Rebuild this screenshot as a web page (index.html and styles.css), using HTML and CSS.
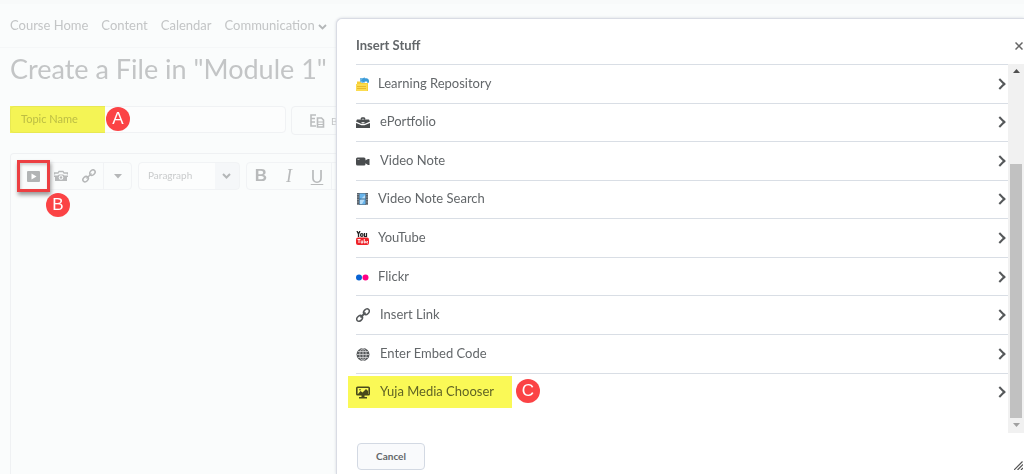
FILE: index.html
```html
<!DOCTYPE html>
<html lang="en">
<head>
<meta charset="utf-8">
<title>Create a File in "Module 1"</title>
<link rel="stylesheet" href="styles.css">
</head>
<body>
<div class="page">
  <nav class="nav">
    <a href="#">Course Home</a>
    <a href="#">Content</a>
    <a href="#">Calendar</a>
    <a href="#" class="nav-menu">Communication
      <svg width="9" height="6" viewBox="0 0 9 6"><path d="M1 1l3.5 3.5L8 1" fill="none" stroke="#b4b7b8" stroke-width="1.8"/></svg></a>
  </nav>
  <main class="main">
    <h1 class="title">Create a File in "Module 1"</h1>
    <div class="topic-row">
      <div class="topic-field">
        <input class="topic" type="text" placeholder="Topic Name" aria-label="Topic Name">
        <span class="topic-mark"></span>
        <span class="badge badge-a">A</span>
      </div>
      <button class="template" type="button">
        <svg width="15" height="14" viewBox="0 0 15 14"><path d="M6 1H1v11h5M1 4.500h4M1 8h4" fill="none" stroke="#bbbdbe" stroke-width="1.600"/><path d="M7.500 4h4l2 2v7h-6z" fill="#fafcfc" stroke="#bbbdbe" stroke-width="1.600"/><path d="M8 8h5M8 10.500h5" stroke="#bbbdbe"/></svg>
        <span>Browse</span>
      </button>
    </div>
    <section class="editor">
      <div class="toolbar">
        <div class="group">
          <button class="tool insert" type="button" aria-label="Insert Stuff">
            <svg width="13" height="11" viewBox="0 0 13 11"><rect width="13" height="11" rx="1" fill="#b2b4b5"/><path d="M4.500 2.500v6l5-3z" fill="#fff"/></svg>
            <span class="badge badge-b">B</span>
          </button>
          <button class="tool" type="button" aria-label="Insert Image">
            <svg width="14" height="12" viewBox="0 0 14 12"><path d="M.5 4.500V3H4l1-1.500h4L10 3h3.500v1.500" fill="none" stroke="#b8babb" stroke-width="1.300"/><path d="M0 5.500h3.500L5 4.500h4l1.500 1H14V7h-1v4H1V7H0z" fill="#b8babb"/><circle cx="7" cy="7.500" r="2.300" fill="#fafcfc"/><circle cx="7" cy="7.500" r="1.200" fill="#b8babb"/></svg>
          </button>
          <button class="tool" type="button" aria-label="Quicklink">
            <svg width="14" height="14" viewBox="0 0 14 14" fill="none" stroke="#b5b7b8" stroke-width="1.500"><ellipse cx="3.600" cy="10.200" rx="3" ry="2.300" transform="rotate(-45 3.600 10.200)"/><ellipse cx="10.400" cy="3.600" rx="3" ry="2.300" transform="rotate(-45 10.400 3.600)"/><path d="M4.500 9.500l5-5"/></svg>
          </button>
          <button class="tool more" type="button" aria-label="More">
            <svg width="8" height="5" viewBox="0 0 8 5"><path d="M0 0h8L4 4.500z" fill="#b5b7b8"/></svg>
          </button>
        </div>
        <div class="format">
          <select aria-label="Format"><option>Paragraph</option></select>
          <svg width="9" height="6" viewBox="0 0 9 6"><path d="M1 1l3.500 3.500L8 1" fill="none" stroke="#b4b7b8" stroke-width="2"/></svg>
        </div>
        <div class="group styles">
          <button class="tool bold" type="button">B</button>
          <button class="tool italic" type="button">I</button>
          <button class="tool under" type="button">U</button>
          <button class="tool more" type="button" aria-label="More styles"></button>
        </div>
      </div>
    </section>
  </main>
</div>

<div class="dialog" role="dialog" aria-labelledby="dialog-title">
  <header class="dialog-head">
    <h2 id="dialog-title">Insert Stuff</h2>
    <button class="close" type="button" aria-label="Close">
      <svg width="8" height="8" viewBox="0 0 8 8"><path d="M.5.5l7 7M7.500.5l-7 7" stroke="#666" stroke-width="1.500"/></svg>
    </button>
  </header>
  <div class="dialog-body">
    <ul class="list">
      <li><a href="#">
        <svg class="pic" width="14" height="14" viewBox="0 0 14 14"><path d="M1 6V4.500h3.500l1 1.500H12v8H1z" fill="#f7cf35"/><path d="M0 7h11v7H0z" fill="#fbdc50"/><path d="M1 9.500h9M1 11.500h9" stroke="#eab92a"/><path d="M4 5V1h5v1.500h3.500V6H11V4.500H9L6.500 6z" fill="#6fb9e6"/><path d="M5 3.500L8.500 0v1.500c3-1 5 .5 4.500 4.500-1-1.500-2.500-2-4.500-1.500V6z" fill="#3b9bd8"/></svg>
        <span>Learning Repository</span></a></li>
      <li><a href="#">
        <svg width="14" height="14" viewBox="0 0 14 14"><path d="M5 4.500L6 3h2l1 1.500" fill="none" stroke="#494c4e" stroke-width="1.500"/><path d="M1 4.500h12l1 2L8.500 9h-3L0 6.500z" fill="#494c4e"/><path d="M0 8l5.500 2.300h3L14 8v5H0z" fill="#494c4e"/><path d="M5.500 7h3v1.500h-3z" fill="#ddd"/></svg>
        <span>ePortfolio</span></a></li>
      <li><a href="#">
        <svg width="14" height="14" viewBox="0 0 14 14"><rect y="3.500" width="9.500" height="8" rx="1.500" fill="#494c4e"/><path d="M9 6.500l3-1.500h1.500v6H12L9 9z" fill="#494c4e"/><path d="M1.500 5.500h2" stroke="#aaa"/></svg>
        <span>Video Note</span></a></li>
      <li><a href="#">
        <svg class="pic" width="14" height="14" viewBox="0 0 14 14"><path d="M1 1h11v12H1z" fill="#59616a"/><path d="M3.500 1.500h6v11h-6z" fill="#67b4ec"/><path d="M4 8l5-5v4l-3 5H4z" fill="#b6dcf7"/><path d="M3 7h7" stroke="#376a94"/><path d="M2 2v11M11 2v11" stroke="#b4babf" stroke-dasharray="1 1.500"/></svg>
        <span>Video Note Search</span></a></li>
      <li><a href="#">
        <svg class="pic" width="14" height="14" viewBox="0 0 14 14"><path d="M1 0l1.500 3L4 0M2.500 3v3" fill="none" stroke="#222" stroke-width="1.300"/><circle cx="5.800" cy="4" r="1.300" fill="none" stroke="#222" stroke-width="1.200"/><path d="M8.500 2v3.500h2V2" fill="none" stroke="#222" stroke-width="1.200"/><rect y="6.500" width="13" height="7.500" rx="2" fill="#ee2229"/><path d="M1.500 8.500h3M3 8.500V12M5.200 9.500V12h1.500V9.500M8.300 8v4h1v-2M12 10.500h-1.200V12H12" fill="none" stroke="#fff" stroke-width=".9"/></svg>
        <span>YouTube</span></a></li>
      <li><a href="#">
        <svg class="pic" width="14" height="14" viewBox="0 0 14 14"><circle cx="3" cy="7.500" r="3" fill="#0863d4"/><circle cx="9.500" cy="7.500" r="3" fill="#ff0084"/></svg>
        <span>Flickr</span></a></li>
      <li><a href="#">
        <svg width="14" height="14" viewBox="0 0 14 14" fill="none" stroke="#55585a" stroke-width="1.500"><ellipse cx="3.600" cy="10.400" rx="3.200" ry="2.400" transform="rotate(-45 3.600 10.400)"/><ellipse cx="10.400" cy="3.800" rx="3.200" ry="2.400" transform="rotate(-45 10.400 3.800)"/><path d="M4.500 9.500l5-5" stroke-width="1.800"/></svg>
        <span>Insert Link</span></a></li>
      <li><a href="#">
        <svg width="14" height="14" viewBox="0 0 14 14" fill="none"><circle cx="7" cy="7.500" r="6.500" fill="#55585a"/><g stroke="#d5d6d7" stroke-width=".8"><ellipse cx="7" cy="7.500" rx="3.200" ry="6"/><path d="M7 1.500v12M1 7.500h12M2 4.500h10M2 10.500h10"/></g></svg>
        <span>Enter Embed Code</span></a></li>
      <li><a href="#" class="marked">
        <svg width="14" height="14" viewBox="0 0 14 14"><rect x=".8" y="2.300" width="12.400" height="7.400" rx=".8" fill="none" stroke="#494c4e" stroke-width="1.600"/><path d="M2 9l2.500-3 2 1.500L10 4l2 2v4H2z" fill="#494c4e"/><circle cx="4" cy="4.700" r=".8" fill="#494c4e"/><path d="M5.500 10h3v2H11v1.500H3V12h2.500z" fill="#494c4e"/></svg>
        <span>Yuja Media Chooser</span><span class="badge badge-c">C</span></a></li>
    </ul>
    <div class="scrollbar">
      <svg width="7" height="4" viewBox="0 0 7 4"><path d="M0 4h7L3.500 0z" fill="#505050"/></svg>
      <div class="thumb"></div>
      <svg width="7" height="4" viewBox="0 0 7 4"><path d="M0 0h7L3.500 4z" fill="#a0a0a0"/></svg>
    </div>
  </div>
  <footer class="dialog-foot">
    <button class="cancel" type="button">Cancel</button>
    <svg class="grip" width="9" height="9" viewBox="0 0 9 9"><path d="M0 9l8.500-8.500M3.500 9L9 3.500M7 9l2-2" stroke="#555" stroke-width="1.200"/></svg>
  </footer>
</div>
</body>
</html>
```
FILE: styles.css
```css
*,
*::after {
  box-sizing: border-box;
}

body {
  margin: 0;
  height: 100vh;
  overflow: hidden;
  background: #fafcfc;
  color: #63676a;
  font: 13px/20px Lato, sans-serif;
}

button,
input,
select {
  margin: 0;
  font-family: inherit;
}

a {
  color: inherit;
  text-decoration: none;
}

.page {
  display: flex;
  flex-direction: column;
  height: 100vh;
  color: #c3c5c6;
}

.nav {
  display: flex;
  gap: 13px;
  padding: 11px 10px 12px;
  border-top: 4px solid #f8fafa;
  border-bottom: 1px solid #f5f7f8;
}

.main {
  display: flex;
  flex: 1;
  flex-direction: column;
  padding: 4px 10px 0;
}

.title {
  margin: 0 0 20px;
  font-size: 27px;
  font-weight: 400;
  line-height: 34px;
}

.topic-row {
  display: flex;
  gap: 5px;
}

.topic-field {
  position: relative;
  width: 276px;
}

.topic {
  width: 100%;
  height: 27px;
  padding: 0 10px 2px;
  border: 1px solid #f0f2f4;
  border-radius: 4px;
  background: #fcfdfd;
  font-size: 11px;
}

.topic::placeholder {
  color: #c3c5c6;
}

.topic-mark {
  position: absolute;
  inset: 0 auto 2px 0;
  width: 95px;
  background: #f7f656;
  mix-blend-mode: multiply;
}

.badge {
  position: absolute;
  width: 24px;
  height: 24px;
  border-radius: 50%;
  background: #fb4345;
  color: #fff;
  font: 17px/24px "Liberation Sans", sans-serif;
  text-align: center;
}

.badge-a {
  top: 1px;
  left: 96px;
}

.badge-b {
  top: 30px;
  left: 27px;
}

.badge-c {
  top: 3px;
  left: 160px;
}

.template {
  display: flex;
  align-items: center;
  gap: 6px;
  height: 29px;
  padding: 0 18px;
  border: 1px solid #eff1f3;
  border-radius: 4px;
  background: #fafcfc;
  color: #c3c5c6;
  font-size: 10px;
}

.editor {
  flex: 1;
  margin-top: 18px;
  border: 1px solid #eff1f3;
  border-bottom: 0;
  border-radius: 4px 4px 0 0;
}

.toolbar {
  display: flex;
  gap: 6px;
  padding: 8px 7px;
}

.group {
  display: flex;
  border: 1px solid #f1f3f5;
  border-radius: 4px;
}

.tool {
  display: flex;
  align-items: center;
  justify-content: center;
  width: 28px;
  height: 26px;
  padding: 0;
  border: 0;
  background: none;
  color: #b8babb;
  font-size: 17px;
}

.insert {
  position: relative;
}

.insert::after {
  position: absolute;
  inset: -3px -3px -3px -2px;
  border: 3px solid #ec3f42;
  box-shadow: 1px 3px 4px #999, inset 1px 2px 3px #ccc;
  content: "";
}

.more {
  border-left: 1px solid #f1f3f5;
}

.format {
  position: relative;
  display: flex;
  align-items: center;
  width: 102px;
  border: 1px solid #f1f3f5;
  border-radius: 4px;
  background: linear-gradient(90deg, #fcfdfd 76px, #f5f7f9 76px);
}

.format select {
  width: 100%;
  height: 26px;
  padding: 0 9px 2px;
  border: 0;
  background: none;
  color: #c9cbcc;
  font-size: 10px;
  appearance: none;
}

.format svg {
  position: absolute;
  right: 8px;
}

.bold {
  font: 700 17px "Liberation Sans", sans-serif;
}

.italic {
  font: italic 18px "Liberation Serif", serif;
}

.under {
  text-decoration: underline;
}

.dialog {
  position: absolute;
  inset: 18px 0 0 336px;
  display: flex;
  flex-direction: column;
  border: solid #d9dce4;
  border-width: 1px 0 0 1px;
  border-radius: 6px 0 0 0;
  background: #fff;
  box-shadow: 0 0 3px #d4d7de;
}

.dialog-head {
  display: flex;
  align-items: center;
  justify-content: space-between;
  height: 45px;
  padding: 8px 1px 0 19px;
}

.dialog-head h2 {
  margin: 0;
  padding-bottom: 2px;
  font-size: 13px;
  font-weight: 700;
}

.close {
  display: flex;
  padding: 0;
  border: 0;
  background: none;
}

.dialog-body {
  display: flex;
  flex: 1;
  padding-left: 19px;
}

.list {
  display: flex;
  flex: 1;
  flex-direction: column;
  margin: 0;
  padding: 0 0 22px;
  list-style: none;
}

.list li {
  display: flex;
  flex: 1;
  align-items: center;
  border-top: 1px solid #d9dee5;
}

.list li::after {
  width: 8px;
  height: 8px;
  margin: 0 4px 0 auto;
  border: solid #55585a;
  border-width: 2px 2px 0 0;
  transform: rotate(45deg);
  content: "";
}

.list a {
  position: relative;
  display: flex;
  align-items: center;
  gap: 10px;
}

.list a > span:first-of-type {
  padding-bottom: 2px;
}

.list .pic {
  margin-right: -2px;
}

.list .marked {
  height: 32px;
}

.marked::after {
  position: absolute;
  inset: 0 -18px 0 -8px;
  background: #faf956;
  mix-blend-mode: multiply;
  content: "";
}

.scrollbar {
  display: flex;
  flex-direction: column;
  align-items: center;
  width: 16px;
  padding: 5px 0 6px;
  background: #f1f1f1;
}

.thumb {
  flex: 1;
  width: 12px;
  margin: 91px 0 5px;
  background: #c1c1c1;
}

.dialog-foot {
  display: flex;
  align-items: flex-end;
  justify-content: space-between;
  padding: 10px 1px 4px 20px;
}

.cancel {
  width: 68px;
  height: 27px;
  padding: 0 0 2px;
  border: 1px solid #d3d9e3;
  border-radius: 4px;
  background: #f9fafc;
  color: #63676a;
  font-size: 10px;
  font-weight: 700;
}
```
